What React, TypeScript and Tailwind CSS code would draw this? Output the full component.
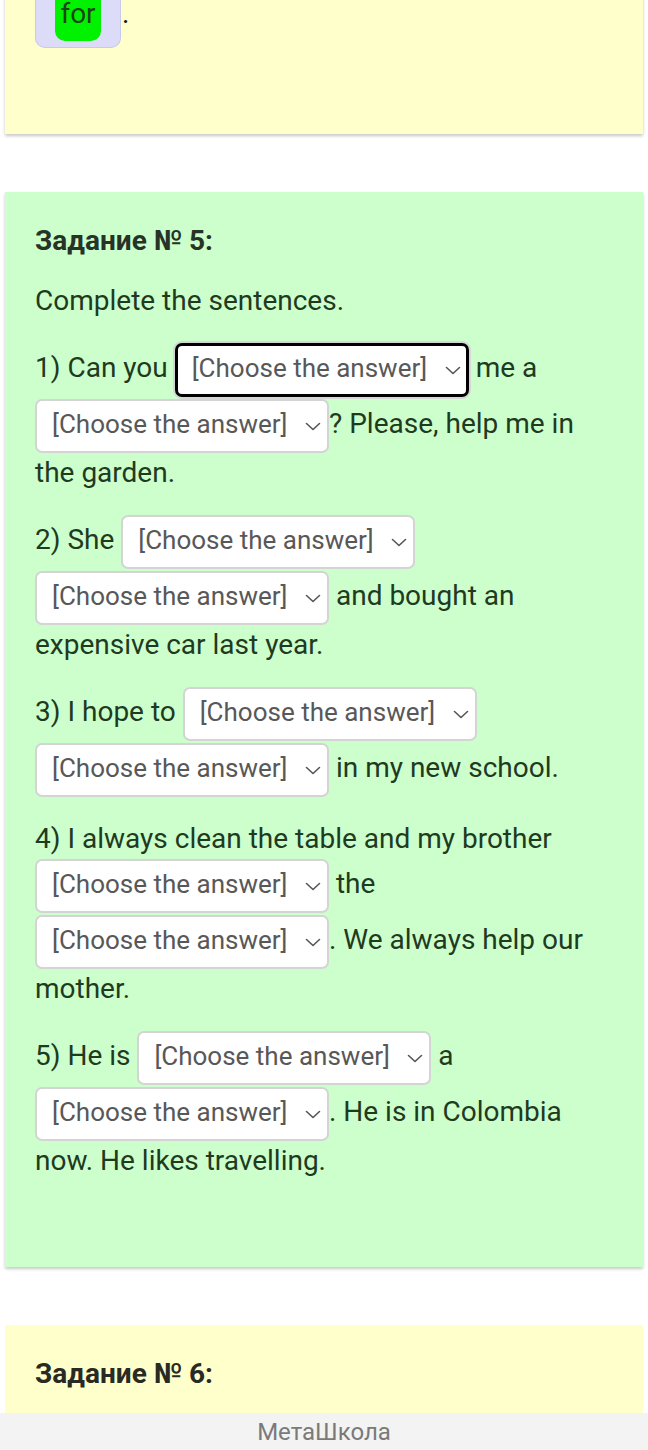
import React from "react";

function Chevron() {
  return (
    <svg width="16" height="9" viewBox="0 0 16 9" className="shrink-0" fill="none">
      <polyline points="1.5,1.5 8,7.5 14.5,1.5" stroke="#555" strokeWidth="1.6" strokeLinecap="round" strokeLinejoin="round" />
    </svg>
  );
}

function Sel({ focused }: { focused?: boolean }) {
  return (
    <span
      className={
        focused
          ? "inline-flex items-center justify-between align-middle h-[54px] w-[294px] my-[1px] pl-[14px] pr-[5px] bg-white rounded-[7px] border-[3px] border-black shadow-[0_0_0_2px_#d6d6d6] text-[26px] leading-[32px] text-[#585858]"
          : "inline-flex items-center justify-between align-middle h-[54px] w-[294px] my-[1px] pl-[15px] pr-[6px] bg-white rounded-[7px] border-2 border-[#d4d4d4] text-[26px] leading-[32px] text-[#585858]"
      }
    >
      <span className="pb-[4px]">[Choose the answer]</span>
      <Chevron />
    </span>
  );
}

export default function App() {
  return (
    <div className="font-[Roboto,sans-serif] bg-white min-h-[1450px] overflow-hidden">
      {/* Card 1 (yellow, partially scrolled) */}
      <div className="-mt-[32px] mx-[5px] mb-[58px] bg-[#ffffcc] shadow-[0_2px_3px_rgba(0,0,0,0.22)] px-[30px] pb-[86px]">
        <div className="flex items-baseline">
          <div className="flex items-end h-[80px] px-[19px] pb-[6px] rounded-b-[10px] bg-[#dcdcf8] border border-t-0 border-[#c9c9e8]">
            <div className="flex items-end justify-center w-[46px] h-[62px] pb-[8px] rounded-b-[10px] bg-[#00f200] text-[28px] leading-[38px] text-[#174717]">
              for
            </div>
          </div>
          <span className="ml-[1px] text-[28px] leading-[38px] text-[#111]">.</span>
        </div>
      </div>

      {/* Card 2 (green) */}
      <div className="mx-[5px] mb-[58px] bg-[#ccffcc] shadow-[0_2px_3px_rgba(0,0,0,0.22)] pt-[30px] px-[30px] pb-[65px] text-[28px] leading-[38px] text-[#1f3a1f]">
        <p className="mb-[22px] font-bold text-[#263326]">Задание № 5:</p>
        <p className="mb-[22px]">Complete the sentences.</p>
        <p className="mb-[22px]">
          1) Can you <Sel focused /> me a <Sel />? Please, help me in the garden.
        </p>
        <p className="mb-[22px]">
          2) She <Sel /> <Sel /> and bought an expensive car last year.
        </p>
        <p className="mb-[22px]">
          3) I hope to <Sel /> <Sel /> in my new school.
        </p>
        <p className="mb-[22px]">
          4) I always clean the table and my brother <Sel /> the <Sel />. We always help our mother.
        </p>
        <p className="mb-[22px]">
          5) He is <Sel /> a <Sel />. He is in Colombia now. He likes travelling.
        </p>
      </div>

      {/* Card 3 (yellow, cut by footer) */}
      <div className="mx-[5px] h-[88px] overflow-hidden bg-[#ffffcc] pt-[30px] px-[30px] text-[28px] leading-[38px]">
        <p className="font-bold text-[#2a2a24]">Задание № 6:</p>
      </div>

      {/* Footer */}
      <div className="h-[38px] bg-[#f3f3f3] flex items-center justify-center text-[24px] text-[#7a7a7a]">
        МетаШкола
      </div>
    </div>
  );
}
